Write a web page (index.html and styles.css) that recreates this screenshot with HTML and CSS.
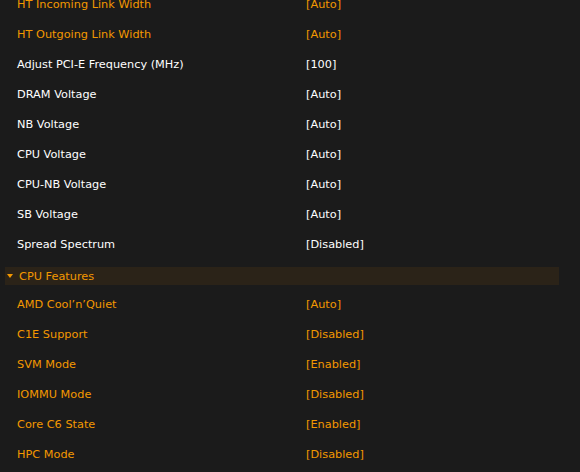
FILE: index.html
```
<!DOCTYPE html>
<html>
<head>
<meta charset="utf-8">
<link rel="stylesheet" href="styles.css">
</head>
<body>
<div class="list">
  <div class="row hl"><span class="label">HT Incoming Link Width</span><span class="value">[Auto]</span></div>
  <div class="row hl"><span class="label">HT Outgoing Link Width</span><span class="value">[Auto]</span></div>
  <div class="row"><span class="label">Adjust PCI-E Frequency (MHz)</span><span class="value">[100]</span></div>
  <div class="row"><span class="label">DRAM Voltage</span><span class="value">[Auto]</span></div>
  <div class="row"><span class="label">NB Voltage</span><span class="value">[Auto]</span></div>
  <div class="row"><span class="label">CPU Voltage</span><span class="value">[Auto]</span></div>
  <div class="row"><span class="label">CPU-NB Voltage</span><span class="value">[Auto]</span></div>
  <div class="row"><span class="label">SB Voltage</span><span class="value">[Auto]</span></div>
  <div class="row"><span class="label">Spread Spectrum</span><span class="value">[Disabled]</span></div>
  <div class="section"><span class="tri"></span><span class="stitle">CPU Features</span></div>
  <div class="row hl"><span class="label">AMD Cool’n’Quiet</span><span class="value">[Auto]</span></div>
  <div class="row hl"><span class="label">C1E Support</span><span class="value">[Disabled]</span></div>
  <div class="row hl"><span class="label">SVM Mode</span><span class="value">[Enabled]</span></div>
  <div class="row hl"><span class="label">IOMMU Mode</span><span class="value">[Disabled]</span></div>
  <div class="row hl"><span class="label">Core C6 State</span><span class="value">[Enabled]</span></div>
  <div class="row hl"><span class="label">HPC Mode</span><span class="value">[Disabled]</span></div>
</div>
</body>
</html>
```
FILE: styles.css
```
html, body {
  margin: 0;
  padding: 0;
  background: #1b1b1b;
  width: 580px;
  height: 472px;
  overflow: hidden;
}
body {
  font-family: "DejaVu Sans", sans-serif;
  font-size: 11.3px;
  color: #ffffff;
}
.list {
  display: flex;
  flex-direction: column;
  margin-top: -11px;
}
.row {
  display: flex;
  align-items: center;
  height: 30px;
  padding-left: 17px;
}
.label {
  width: 289px;
}
.hl {
  color: #f39800;
}
.section {
  display: flex;
  align-items: center;
  height: 18px;
  margin: 8px 21px 4px 5px;
  background: #2b2318;
  color: #f39800;
}
.tri {
  width: 0;
  height: 0;
  margin-left: 2px;
  margin-right: 6px;
  border-left: 3.5px solid transparent;
  border-right: 3.5px solid transparent;
  border-top: 4px solid #f39800;
}
```
